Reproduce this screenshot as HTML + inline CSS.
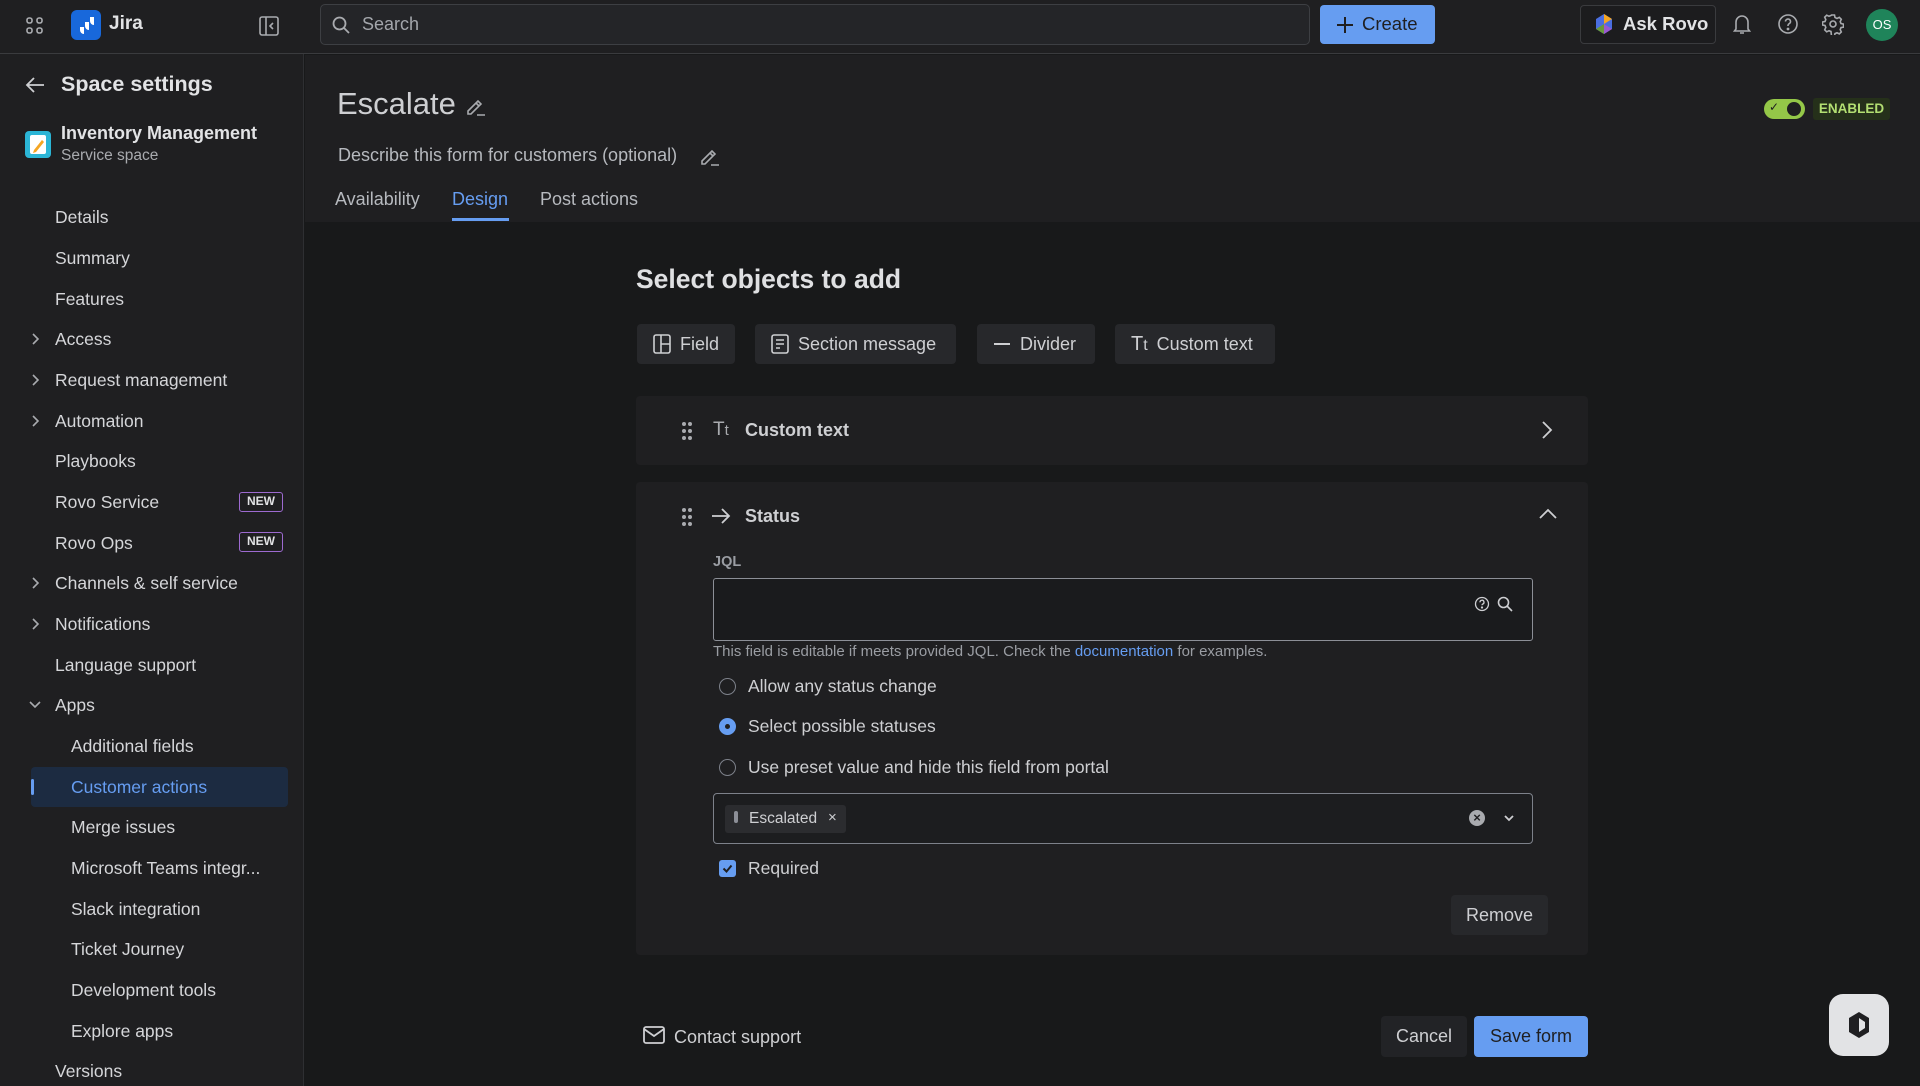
<!DOCTYPE html>
<html><head><meta charset="utf-8"><style>
*{box-sizing:border-box;margin:0;padding:0}
body{width:1920px;height:1086px;background:#18191a;font-family:"Liberation Sans",sans-serif;color:#cecfd2;position:relative;overflow:hidden}
.a{position:absolute}
.top{left:0;top:0;width:1920px;height:54px;background:#1f1f21;border-bottom:1px solid #3a3b3e}
.side{left:0;top:54px;width:304px;height:1032px;background:#1f1f21;border-right:1px solid #2e2f32}
.nav{position:absolute;font-size:17.5px;color:#d5d6d9;line-height:22px}
.hdr{left:305px;top:55px;width:1615px;height:167px;background:#1f1f21}
.btn{position:absolute;background:#27282b;border-radius:4px;font-size:18px;color:#cecfd2;display:flex;align-items:center;gap:9px;padding-left:16px}
.card{position:absolute;left:636px;width:952px;background:#1f1f21;border-radius:4px}
svg{display:block}
.radio{position:absolute;left:719px;width:17px;height:17px;border-radius:50%;border:1.5px solid #7d818a}
.rl{position:absolute;left:748px;font-size:17.5px;color:#cecfd2}
</style></head><body>
<div class="a top"></div>
<svg class="a" style="left:25px;top:16px" width="20" height="20" viewBox="0 0 20 20" fill="none" stroke="#a9abaf" stroke-width="1.6"><rect x="2" y="2" width="5" height="5" rx="2"/><rect x="12" y="2" width="5" height="5" rx="2"/><rect x="2" y="12" width="5" height="5" rx="2"/><rect x="12" y="12" width="5" height="5" rx="2"/></svg>
<div class="a" style="left:71px;top:10px;width:30px;height:30px;background:#1868db;border-radius:6px"></div>
<svg class="a" style="left:75px;top:14px" width="22" height="22" viewBox="0 0 22 22" fill="#fff"><path d="M15 3h4v8a4 4 0 0 1-4-4zM10 8h4v8a4 4 0 0 1-4-4zM5 13h4v7a4 4 0 0 1-4-4z"/></svg>
<div class="a" style="left:109px;top:13px;font-size:19px;font-weight:bold;color:#e2e3e5">Jira</div>
<svg class="a" style="left:258px;top:15px" width="22" height="22" viewBox="0 0 22 22" fill="none" stroke="#a9abaf" stroke-width="1.6"><rect x="2" y="2" width="18" height="18" rx="2"/><path d="M8 2v18M15 8l-3 3 3 3"/></svg>
<div class="a" style="left:320px;top:4px;width:990px;height:41px;background:#242528;border:1px solid #3d3f43;border-radius:5px"></div>
<svg class="a" style="left:331px;top:15px" width="20" height="20" viewBox="0 0 20 20" fill="none" stroke="#a9abaf" stroke-width="1.8"><circle cx="8.5" cy="8.5" r="6"/><path d="M13 13l5 5"/></svg>
<div class="a" style="left:362px;top:14px;font-size:18px;color:#a3a6ab">Search</div>
<div class="a" style="left:1320px;top:5px;width:115px;height:39px;background:#669df1;border-radius:4px"></div>
<svg class="a" style="left:1335px;top:15px" width="20" height="20" viewBox="0 0 20 20" stroke="#1f1f21" stroke-width="2"><path d="M10 2v16M2 10h16"/></svg>
<div class="a" style="left:1362px;top:13px;font-size:18.5px;color:#1f1f21">Create</div>
<div class="a" style="left:1580px;top:5px;width:136px;height:39px;border:1px solid #3a3b3e;border-radius:4px;background:#1c1c1e"></div>
<svg class="a" style="left:1594px;top:13px" width="20" height="22" viewBox="0 0 20 22"><path d="M10 1l8 5v10l-8 5-8-5V6z" fill="#4a6ee0"/><path d="M10 1l8 5-8 5z" fill="#f5a623"/><path d="M2 16l8-5v10z" fill="#6a9a3a"/><path d="M10 11l8 5-8 5z" fill="#9b59d0"/></svg>
<div class="a" style="left:1623px;top:13px;font-size:18.5px;color:#e2e3e5;font-weight:bold">Ask Rovo</div>
<svg class="a" style="left:1732px;top:13px" width="20" height="22" viewBox="0 0 20 22" fill="none" stroke="#a9abaf" stroke-width="1.6"><path d="M4 16V9a6 6 0 0 1 12 0v7l1.5 2h-15zM8 20h4"/></svg>
<svg class="a" style="left:1777px;top:13px" width="22" height="22" viewBox="0 0 22 22" fill="none" stroke="#a9abaf" stroke-width="1.6"><circle cx="11" cy="11" r="9"/><path d="M8.5 8.5a2.5 2.5 0 1 1 3.5 2.3c-.7.4-1 .9-1 1.7v.5"/><circle cx="11" cy="16" r=".6" fill="#a9abaf"/></svg>
<svg class="a" style="left:1822px;top:13px" width="22" height="22" viewBox="0 0 22 22" fill="none" stroke="#a9abaf" stroke-width="1.6"><circle cx="11" cy="11" r="3"/><path d="M9.5 2h3l.5 2.5 2 1 2.3-1.2 2 2-1.1 2.3.8 2 2.5.5v3l-2.5.5-.8 2 1.1 2.3-2 2-2.300-1.1-2 .8-.5 2.5h-3L9 18.5l-2-.8-2.3 1.1-2-2L3.8 14.5 3 12.5.5 12v-3L3 8.5l.8-2-1.1-2.3 2-2L7 3.3l2-.8z"/></svg>
<div class="a" style="left:1866px;top:9px;width:32px;height:32px;border-radius:50%;background:#1f845a;color:#fff;font-size:13px;text-align:center;line-height:32px">OS</div>
<div class="a side"></div>
<svg class="a" style="left:24px;top:75px" width="22" height="20" viewBox="0 0 22 20" fill="none" stroke="#cecfd2" stroke-width="1.8"><path d="M20 10H3M10 3l-7 7 7 7"/></svg>
<div class="a" style="left:61px;top:72px;font-size:21.5px;font-weight:bold;color:#e2e3e5">Space settings</div>
<div class="a" style="left:25px;top:131px;width:26px;height:27px;background:#2bb5d6;border-radius:4px"></div>
<div class="a" style="left:30px;top:135px;width:16px;height:19px;background:#fff;border-radius:2px"></div>
<svg class="a" style="left:31px;top:137px" width="16" height="16" viewBox="0 0 16 16"><path d="M3 13l8-10 2 2-8 10-3 1z" fill="#f5a623"/></svg>
<div class="a" style="left:61px;top:123px;font-size:18px;font-weight:bold;color:#e2e3e5">Inventory Management</div>
<div class="a" style="left:61px;top:147px;font-size:15.5px;color:#a9abaf">Service space</div>
<div class="a" style="left:31px;top:767px;width:257px;height:40px;background:#1c2b41;border-radius:4px"></div>
<div class="a" style="left:31px;top:779px;width:3px;height:16px;background:#669df1;border-radius:2px"></div>
<div class="nav" style="left:55px;top:206px">Details</div>
<div class="nav" style="left:55px;top:247px">Summary</div>
<div class="nav" style="left:55px;top:288px">Features</div>
<div class="nav" style="left:55px;top:328px">Access</div>
<div class="nav" style="left:55px;top:369px">Request management</div>
<div class="nav" style="left:55px;top:410px">Automation</div>
<div class="nav" style="left:55px;top:450px">Playbooks</div>
<div class="nav" style="left:55px;top:491px">Rovo Service</div>
<div class="nav" style="left:55px;top:532px">Rovo Ops</div>
<div class="nav" style="left:55px;top:572px">Channels &amp; self service</div>
<div class="nav" style="left:55px;top:613px">Notifications</div>
<div class="nav" style="left:55px;top:654px">Language support</div>
<div class="nav" style="left:55px;top:694px">Apps</div>
<div class="nav" style="left:71px;top:735px">Additional fields</div>
<div class="nav" style="left:71px;top:776px;color:#669df1">Customer actions</div>
<div class="nav" style="left:71px;top:816px">Merge issues</div>
<div class="nav" style="left:71px;top:857px">Microsoft Teams integr...</div>
<div class="nav" style="left:71px;top:898px">Slack integration</div>
<div class="nav" style="left:71px;top:938px">Ticket Journey</div>
<div class="nav" style="left:71px;top:979px">Development tools</div>
<div class="nav" style="left:71px;top:1020px">Explore apps</div>
<div class="nav" style="left:55px;top:1060px">Versions</div>
<svg class="a" style="left:30px;top:332px" width="12" height="300" viewBox="0 0 12 300" fill="none" stroke="#a9abaf" stroke-width="1.6"><path d="M3 2l5 5-5 5M3 43l5 5-5 5M3 84l5 5-5 5M3 246l5 5-5 5M3 287l5 5-5 5"/></svg>
<svg class="a" style="left:28px;top:700px" width="14" height="10" viewBox="0 0 14 10" fill="none" stroke="#a9abaf" stroke-width="1.6"><path d="M2 2l5 5 5-5"/></svg>
<div class="a" style="left:239px;top:492px;width:44px;height:20px;border:1.5px solid #9d6ad0;border-radius:3px;font-size:12px;font-weight:bold;color:#e2e3e5;text-align:center;line-height:17px">NEW</div>
<div class="a" style="left:239px;top:532px;width:44px;height:20px;border:1.5px solid #9d6ad0;border-radius:3px;font-size:12px;font-weight:bold;color:#e2e3e5;text-align:center;line-height:17px">NEW</div>
<div class="a hdr"></div>
<div class="a" style="left:337px;top:86px;font-size:31px;color:#cecfd2">Escalate</div>
<svg class="a" style="left:465px;top:95px" width="22" height="22" viewBox="0 0 22 22" fill="none" stroke="#a9abaf" stroke-width="1.6"><path d="M3 16l10-10 3 3-10 10H3zM11 8l3 3M12 20h8"/></svg>
<div class="a" style="left:338px;top:145px;font-size:18px;color:#b6b9be">Describe this form for customers (optional)</div>
<svg class="a" style="left:699px;top:145px" width="22" height="22" viewBox="0 0 22 22" fill="none" stroke="#a9abaf" stroke-width="1.6"><path d="M3 16l10-10 3 3-10 10H3zM11 8l3 3M12 20h8"/></svg>
<div class="a" style="left:335px;top:189px;font-size:18px;color:#b6b9be">Availability</div>
<div class="a" style="left:452px;top:189px;font-size:18px;color:#669df1">Design</div>
<div class="a" style="left:452px;top:218px;width:57px;height:3px;background:#669df1"></div>
<div class="a" style="left:540px;top:189px;font-size:18px;color:#b6b9be">Post actions</div>
<div class="a" style="left:1764px;top:99px;width:41px;height:20px;border-radius:10px;background:#94c748"></div>
<div class="a" style="left:1787px;top:102px;width:14px;height:14px;border-radius:50%;background:#1f1f21"></div>
<div class="a" style="left:1769px;top:100px;font-size:12px;color:#1f1f21">✓</div>
<div class="a" style="left:1813px;top:98px;width:77px;height:22px;background:#25301a;border-radius:3px;font-size:13.5px;font-weight:bold;color:#b3df72;text-align:center;line-height:22px">ENABLED</div>
<div class="a" style="left:636px;top:264px;font-size:26.5px;font-weight:bold;color:#dfe0e2">Select objects to add</div>
<div class="btn" style="left:637px;top:324px;width:98px;height:40px"><svg width="18" height="20" viewBox="0 0 18 20" fill="none" stroke="#cecfd2" stroke-width="1.6"><rect x="1" y="1" width="16" height="18" rx="2"/><path d="M8 1v18M8 10h9"/></svg>Field</div>
<div class="btn" style="left:755px;top:324px;width:201px;height:40px"><svg width="18" height="20" viewBox="0 0 18 20" fill="none" stroke="#cecfd2" stroke-width="1.6"><rect x="1" y="1" width="16" height="18" rx="2"/><path d="M5 6h8M5 10h8M5 14h4"/></svg>Section message</div>
<div class="btn" style="left:977px;top:324px;width:118px;height:40px"><svg width="18" height="20" viewBox="0 0 18 20" stroke="#cecfd2" stroke-width="2"><path d="M1 10h16"/></svg>Divider</div>
<div class="btn" style="left:1115px;top:324px;width:160px;height:40px"><span style="font-size:20px">T<span style="font-size:16px">t</span></span>Custom text</div>
<div class="card" style="top:396px;height:69px"></div>
<svg class="a" style="left:681px;top:421px" width="12" height="20" viewBox="0 0 12 20" fill="#a9abaf"><circle cx="3" cy="3" r="2"/><circle cx="9" cy="3" r="2"/><circle cx="3" cy="10" r="2"/><circle cx="9" cy="10" r="2"/><circle cx="3" cy="17" r="2"/><circle cx="9" cy="17" r="2"/></svg>
<div class="a" style="left:713px;top:419px;font-size:19px;color:#a9abaf">T<span style="font-size:15px">t</span></div>
<div class="a" style="left:745px;top:420px;font-size:18px;font-weight:bold;color:#cecfd2">Custom text</div>
<svg class="a" style="left:1541px;top:420px" width="12" height="20" viewBox="0 0 12 20" fill="none" stroke="#cecfd2" stroke-width="1.8"><path d="M2 2l8 8-8 8"/></svg>
<div class="card" style="top:482px;height:473px"></div>
<svg class="a" style="left:681px;top:507px" width="12" height="20" viewBox="0 0 12 20" fill="#a9abaf"><circle cx="3" cy="3" r="2"/><circle cx="9" cy="3" r="2"/><circle cx="3" cy="10" r="2"/><circle cx="9" cy="10" r="2"/><circle cx="3" cy="17" r="2"/><circle cx="9" cy="17" r="2"/></svg>
<svg class="a" style="left:711px;top:507px" width="20" height="18" viewBox="0 0 20 18" fill="none" stroke="#cecfd2" stroke-width="1.8"><path d="M1 9h17M11 2l7 7-7 7"/></svg>
<div class="a" style="left:745px;top:506px;font-size:18px;font-weight:bold;color:#cecfd2">Status</div>
<svg class="a" style="left:1538px;top:508px" width="20" height="12" viewBox="0 0 20 12" fill="none" stroke="#cecfd2" stroke-width="1.8"><path d="M2 10l8-8 8 8"/></svg>
<div class="a" style="left:713px;top:554px;font-size:14.5px;font-weight:bold;color:#9a9da3">JQL</div>
<div class="a" style="left:713px;top:578px;width:820px;height:63px;border:1.5px solid #8c8f97;border-radius:3px;background:#1a1b1d"></div>
<svg class="a" style="left:1474px;top:596px" width="16" height="16" viewBox="0 0 16 16" fill="none" stroke="#cecfd2" stroke-width="1.3"><circle cx="8" cy="8" r="6.5"/><path d="M6 6.3a2 2 0 1 1 2.7 1.8c-.5.3-.7.6-.7 1.2"/><circle cx="8" cy="11.5" r=".5" fill="#cecfd2"/></svg>
<svg class="a" style="left:1497px;top:596px" width="16" height="16" viewBox="0 0 16 16" fill="none" stroke="#cecfd2" stroke-width="1.6"><circle cx="6.5" cy="6.5" r="5"/><path d="M10 10l5 5"/></svg>
<div class="a" style="left:713px;top:643px;font-size:15px;color:#9a9da3">This field is editable if meets provided JQL. Check the <span style="color:#669df1">documentation</span> for examples.</div>
<div class="radio" style="top:678px"></div>
<div class="rl" style="top:676px">Allow any status change</div>
<div class="radio" style="top:718px;background:#669df1;border-color:#669df1"><div style="width:5px;height:5px;background:#1f1f21;border-radius:50%;margin:4.5px auto"></div></div>
<div class="rl" style="top:716px">Select possible statuses</div>
<div class="radio" style="top:759px"></div>
<div class="rl" style="top:757px">Use preset value and hide this field from portal</div>
<div class="a" style="left:713px;top:793px;width:820px;height:51px;border:1.5px solid #7d818a;border-radius:4px;background:#1c1d1f"></div>
<div class="a" style="left:725px;top:805px;width:121px;height:28px;background:#2b2c2f;border-radius:3px"></div>
<div class="a" style="left:734px;top:811px;width:4px;height:12px;background:#8c8f97;border-radius:2px"></div>
<div class="a" style="left:749px;top:810px;font-size:15.5px;color:#cecfd2">Escalated</div>
<div class="a" style="left:828px;top:809px;font-size:15px;color:#cecfd2">×</div>
<div class="a" style="left:1469px;top:810px;width:16px;height:16px;border-radius:50%;background:#a9abaf;color:#1f1f21;font-size:13px;text-align:center;line-height:16px;font-weight:bold">×</div>
<svg class="a" style="left:1503px;top:814px" width="12" height="8" viewBox="0 0 12 8" fill="none" stroke="#cecfd2" stroke-width="1.8"><path d="M2 2l4 4 4-4"/></svg>
<div class="a" style="left:719px;top:860px;width:17px;height:17px;border-radius:3px;background:#669df1"></div>
<svg class="a" style="left:721px;top:862px" width="13" height="13" viewBox="0 0 13 13" fill="none" stroke="#1f1f21" stroke-width="2"><path d="M2.5 6.5l3 3 5-6"/></svg>
<div class="rl" style="top:858px">Required</div>
<div class="a" style="left:1451px;top:895px;width:97px;height:40px;background:#27282b;border-radius:4px;font-size:18px;color:#cecfd2;text-align:center;line-height:40px">Remove</div>
<svg class="a" style="left:643px;top:1026px" width="22" height="18" viewBox="0 0 22 18" fill="none" stroke="#cecfd2" stroke-width="1.8"><rect x="1" y="1" width="20" height="16" rx="2"/><path d="M1 3l10 7 10-7"/></svg>
<div class="a" style="left:674px;top:1027px;font-size:18px;color:#cecfd2">Contact support</div>
<div class="a" style="left:1381px;top:1016px;width:86px;height:41px;background:#222326;border-radius:4px;font-size:18px;color:#cecfd2;text-align:center;line-height:41px">Cancel</div>
<div class="a" style="left:1474px;top:1016px;width:114px;height:41px;background:#669df1;border-radius:4px;font-size:18px;color:#1f1f21;text-align:center;line-height:41px">Save form</div>
<div class="a" style="left:1829px;top:994px;width:60px;height:62px;background:#e2e3e5;border-radius:14px"></div>
<svg class="a" style="left:1845px;top:1010px" width="28" height="30" viewBox="0 0 28 30"><path d="M14 2l10 6v14l-10 6-10-6V8z" fill="#1f1f21"/><path d="M14 8v14l6-4V12z" fill="#e2e3e5"/></svg>
</body></html>
